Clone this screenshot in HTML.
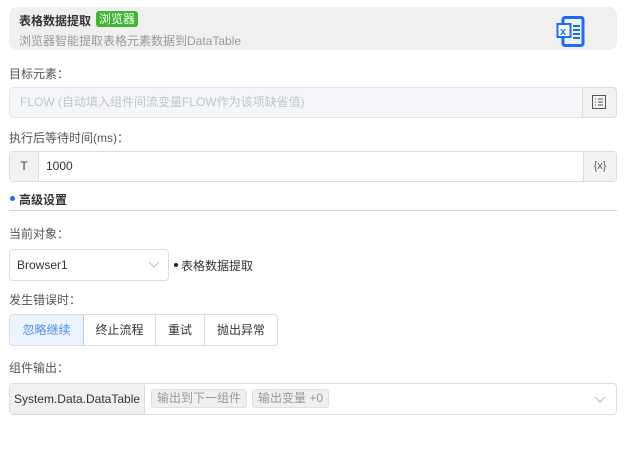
<!DOCTYPE html><html><head><meta charset="utf-8"><style>
*{box-sizing:border-box;margin:0;padding:0}
body{width:629px;height:464px;background:#fff;font-family:"Liberation Sans","Noto Sans CJK SC",sans-serif;font-size:12px;color:#333;position:relative;overflow:hidden}
.a{position:absolute}
.lbl{font-size:12px;color:#555}
</style></head><body>
<div class="a" style="left:9px;top:7px;width:608px;height:43px;background:#f0f0f0;border-radius:8px"></div>
<div class="a" style="left:19px;top:12px;font-size:12px;font-weight:bold;color:#333">表格数据提取</div>
<div class="a" style="left:96px;top:11px;height:16px;padding:0 3px;background:#3cb72f;color:#fff;border-radius:3px;font-size:12px;line-height:16px">浏览器</div>
<div class="a" style="left:19px;top:32px;font-size:12px;color:#999">浏览器智能提取表格元素数据到DataTable</div>
<svg class="a" style="left:556px;top:15px" width="30" height="33" viewBox="0 0 30 33"><rect x="7" y="2.5" width="20" height="28" rx="2" fill="none" stroke="#1a6ef5" stroke-width="3"/><rect x="1.5" y="9" width="13" height="13" fill="#fff" stroke="#1a6ef5" stroke-width="2"/><text x="4" y="20" font-size="11" font-weight="bold" fill="#1a6ef5" font-family="Liberation Sans">x</text><path d="M17 11h7M17 15h7M17 19h7M17 23h7" stroke="#1a6ef5" stroke-width="2"/></svg>
<div class="a lbl" style="left:9px;top:65px">目标元素：</div>
<div class="a" style="left:9px;top:87px;width:574px;height:31px;background:#f5f6f9;border:1px solid #e4e6ec;border-radius:4px 0 0 4px;color:#c0c4cc;padding:0 0 0 10px;line-height:29px">FLOW (自动填入组件间流变量FLOW作为该项缺省值)</div>
<div class="a" style="left:582px;top:87px;width:35px;height:31px;background:#f2f2f2;border:1px solid #dcdcdc;border-radius:0 4px 4px 0"></div>
<svg class="a" style="left:592px;top:95px" width="14" height="14"><rect x="0.5" y="0.5" width="13" height="13" fill="none" stroke="#555"/><path d="M3 4h1M6 4h5M3 7h1M6 7h5M3 10h1M6 10h5" stroke="#555"/></svg>
<div class="a lbl" style="left:9px;top:129px">执行后等待时间(ms)：</div>
<div class="a" style="left:9px;top:151px;width:608px;height:31px;border:1px solid #dcdcdc;border-radius:4px"></div>
<div class="a" style="left:10px;top:152px;width:29px;height:29px;background:#f2f2f2;border-right:1px solid #dcdcdc;text-align:center;line-height:29px;color:#444">T</div>
<div class="a" style="left:46px;top:152px;line-height:29px;color:#333">1000</div>
<div class="a" style="left:583px;top:152px;width:33px;height:29px;background:#f2f2f2;border-left:1px solid #dcdcdc;text-align:center;line-height:29px;color:#666;font-size:11px">{x}</div>
<div class="a" style="left:10px;top:196px;width:5px;height:5px;border-radius:50%;background:#1a6ef5"></div>
<div class="a" style="left:19px;top:191px;font-weight:bold;color:#333">高级设置</div>
<div class="a" style="left:9px;top:210px;width:608px;height:1px;background:#d0d0d0"></div>
<div class="a lbl" style="left:9px;top:225px">当前对象：</div>
<div class="a" style="left:9px;top:249px;width:160px;height:32px;border:1px solid #dcdcdc;border-radius:4px;padding-left:7px;line-height:30px;color:#333">Browser1</div>
<svg class="a" style="left:148px;top:261px" width="12" height="8"><path d="M1 1l5 5 5-5" fill="none" stroke="#bbb"/></svg>
<div class="a" style="left:174px;top:263px;width:4px;height:4px;border-radius:50%;background:#222"></div>
<div class="a" style="left:181px;top:257px;color:#333">表格数据提取</div>
<div class="a lbl" style="left:9px;top:291px">发生错误时：</div>
<div class="a" style="left:9px;top:314px;width:269px;height:32px;border:1px solid #dcdcdc;border-radius:4px;display:flex;overflow:hidden">
<div style="width:74px;background:#ecf4ff;border-right:1px solid #a9cbf5;color:#4a8ef0;text-align:center;line-height:30px">忽略继续</div>
<div style="width:72px;border-right:1px solid #dcdcdc;text-align:center;line-height:30px">终止流程</div>
<div style="width:49px;border-right:1px solid #dcdcdc;text-align:center;line-height:30px">重试</div>
<div style="flex:1;text-align:center;line-height:30px">抛出异常</div></div>
<div class="a lbl" style="left:9px;top:359px">组件输出：</div>
<div class="a" style="left:9px;top:383px;width:608px;height:32px;border:1px solid #dcdcdc;border-radius:4px"></div>
<div class="a" style="left:10px;top:384px;width:135px;height:30px;background:#f0f0f0;border-right:1px solid #dcdcdc;line-height:30px;text-align:center;color:#333">System.Data.DataTable</div>
<div class="a" style="left:151px;top:389px;height:19px;padding:0 5px;background:#f0f0f0;border:1px solid #e0e0e0;border-radius:3px;line-height:17px;color:#999">输出到下一组件</div>
<div class="a" style="left:252px;top:389px;height:19px;padding:0 5px;background:#f0f0f0;border:1px solid #e0e0e0;border-radius:3px;line-height:17px;color:#999">输出变量 +0</div>
<svg class="a" style="left:594px;top:396px" width="12" height="8"><path d="M1 1l5 5 5-5" fill="none" stroke="#bbb"/></svg>
</body></html>
